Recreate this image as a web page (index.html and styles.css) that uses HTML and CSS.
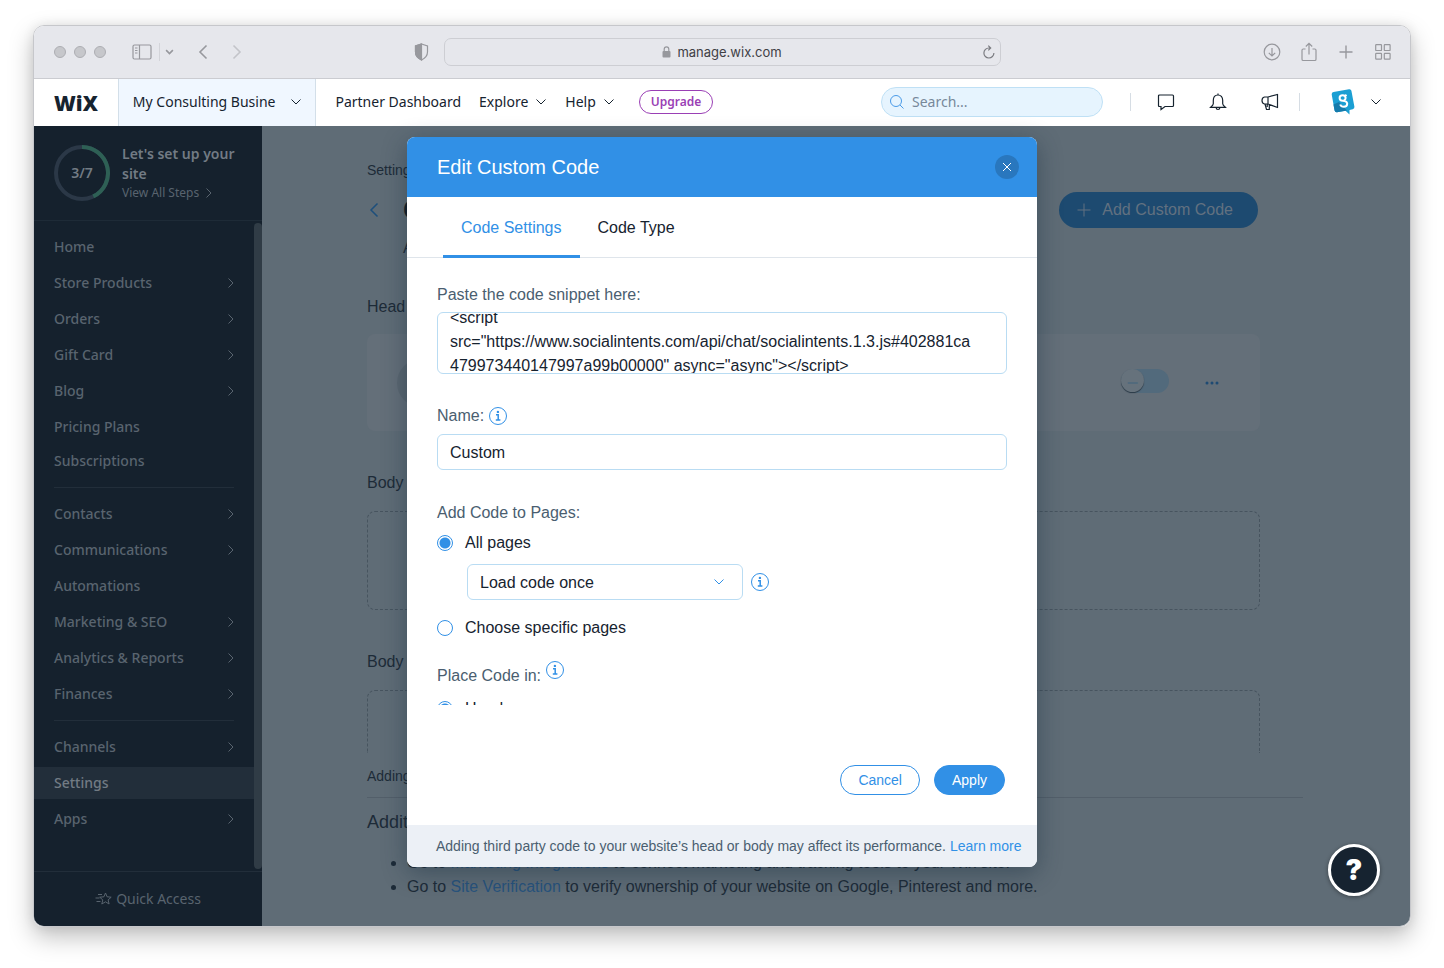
FILE: index.html
```html
<!DOCTYPE html>
<html lang="en">
<head>
<meta charset="utf-8">
<title>Edit Custom Code</title>
<link rel="stylesheet" href="styles.css">
</head>
<body>
<svg class="sprite" aria-hidden="true">
  <symbol id="right" viewBox="0 0 8 12"><path d="M1.5 1.5 6 6l-4.500 4.500"/></symbol>
  <symbol id="left" viewBox="0 0 10 16"><path d="M8.500 1.500 2 8l6.500 6.500"/></symbol>
  <symbol id="down" viewBox="0 0 12 8"><path d="M1.500 1.500 6 6l4.500-4.500"/></symbol>
  <symbol id="info" viewBox="0 0 20 20"><circle cx="10" cy="10" r="8.500"/><path d="M8 8.800h2.200V14M7.800 14h4.600" stroke-width="1.500"/><circle cx="9.900" cy="5.900" r="1.200" fill="currentColor" stroke="none"/></symbol>
</svg>
<div class="window">
  <div class="toolbar">
    <div class="toolbar-left">
      <div class="lights"><span></span><span></span><span></span></div>
      <button class="icon-btn sidebar-btn" aria-label="Show sidebar"><svg width="20" height="16" viewBox="0 0 20 16"><rect x="1" y="1" width="18" height="14" rx="1.500"/><path d="M7.500 1v14M3 4h2.500M3 6.500h2.500M3 9h2.500"/></svg></button>
      <span class="bar-rule"></span>
      <button class="icon-btn tabs-btn" aria-label="Tab groups"><svg width="9" height="6" viewBox="0 0 12 8" stroke-width="2.200"><use href="#down"/></svg></button>
      <button class="icon-btn back-btn" aria-label="Back"><svg width="10" height="16" stroke-width="1.600"><use href="#left"/></svg></button>
      <button class="icon-btn forward-btn" aria-label="Forward"><svg width="10" height="16" viewBox="0 0 10 16" stroke-width="1.600"><path d="M1.500 1.500 8 8l-6.500 6.500"/></svg></button>
      <button class="icon-btn shield-btn" aria-label="Privacy report"><svg width="15" height="18" viewBox="0 0 15 18"><path d="M7.500 1 13.500 3v6c0 4-3 6.500-6 8-3-1.500-6-4-6-8V3z"/><path d="M7.500 1v16c-3-1.500-6-4-6-8V3z" fill="currentColor"/></svg></button>
    </div>
    <div class="address">
      <svg width="9" height="12" viewBox="0 0 9 12"><rect x=".5" y="5" width="8" height="6.500" rx="1" fill="currentColor" stroke="none"/><path d="M2.200 5.500V3.200a2.300 2.300 0 0 1 4.600 0v2.300"/></svg>
      <span>manage.wix.com</span>
      <button class="icon-btn reload-btn" aria-label="Reload"><svg width="12" height="14" viewBox="0 0 12 14"><path d="M10.900 8A5 5 0 1 1 6 3h1.500M5.300.600 7.700 3 5.300 5.400"/></svg></button>
    </div>
    <div class="toolbar-right">
      <button class="icon-btn" aria-label="Downloads"><svg width="18" height="18" viewBox="0 0 18 18"><circle cx="9" cy="9" r="7.800"/><path d="M9 5v8M5.800 9.800 9 13l3.200-3.200"/></svg></button>
      <button class="icon-btn" aria-label="Share"><svg width="18" height="20" viewBox="0 0 18 20"><path d="M5.500 7H3.200Q2 7 2 8.200v9Q2 18.500 3.200 18.500h11.600q1.200 0 1.200-1.300v-9Q16 7 14.800 7h-2.300M9 12.500V1.500M5.800 4.500 9 1.300l3.200 3.200"/></svg></button>
      <button class="icon-btn" aria-label="New tab"><svg width="18" height="18" viewBox="0 0 18 18"><path d="M9 2.500v13M2.500 9h13" stroke-width="1.400"/></svg></button>
      <button class="icon-btn" aria-label="Tab overview"><svg width="18" height="18" viewBox="0 0 18 18"><rect x="1.700" y="1.700" width="5.800" height="5.800" rx=".6"/><rect x="10.300" y="1.700" width="5.800" height="5.800" rx=".6"/><rect x="1.700" y="10.300" width="5.800" height="5.800" rx=".6"/><rect x="10.300" y="10.300" width="5.800" height="5.800" rx=".6"/></svg></button>
    </div>
  </div>

  <header class="header">
    <a class="logo" href="#">WiX</a>
    <button class="site-btn"><span>My Consulting Busine</span><svg width="12" height="8"><use href="#down"/></svg></button>
    <nav class="top-nav">
      <a href="#">Partner Dashboard</a>
      <button>Explore<svg width="12" height="8"><use href="#down"/></svg></button>
      <button>Help<svg width="12" height="8"><use href="#down"/></svg></button>
    </nav>
    <button class="upgrade">Upgrade</button>
    <label class="search"><svg width="16" height="16" viewBox="0 0 16 16"><circle cx="7" cy="7" r="5.500"/><path d="m11 11 3.500 3.500"/></svg><input type="search" placeholder="Search..." aria-label="Search"></label>
    <div class="header-icons">
      <button class="icon-btn" aria-label="Inbox"><svg width="18" height="18" viewBox="0 0 18 18"><path d="M2.500 2h13q1 0 1 1v9.500q0 1-1 1H8l-4 3v-3H2.500q-1 0-1-1V3q0-1 1-1z"/></svg></button>
      <button class="icon-btn" aria-label="Notifications"><svg width="18" height="18" viewBox="0 0 18 18"><path d="M9 .500V2M4.300 7.500C4.300 4 6.300 2 9 2s4.700 2 4.700 5.500v3.200q0 1.300 2.600 3.600H1.700q2.600-2.300 2.600-3.600zM7 14.500q.3 2 2 2t2-2"/></svg></button>
      <button class="icon-btn" aria-label="What's new"><svg width="18" height="18" viewBox="0 0 18 18"><path d="M7 4 16.500 1.500v13L7 11H3.500Q1 10.500 1 7.500T3.500 4zM7 4v7M4 11l1.500 5.500h2.800V11.500M6.200 11v3"/></svg></button>
    </div>
    <button class="account" aria-label="Account"><svg width="26" height="28" viewBox="0 0 26 28"><path d="M3.500 4 19 1.200q2-.3 2.400 1.600l3 16q.3 2-1.700 2.400l-3.200.8v4.500L15.500 22.800 7 24.300q-2 .3-2.400-1.700L1.700 6.500Q1.500 4.400 3.500 4z" fill="#1b9fd3" stroke="none"/><path d="M3.500 16.500 9 14l8 8.500L7 24.300q-2 .3-2.400-1.700z" fill="#157bab" stroke="none"/><path d="M16.500 6.800 15 8.200M15.600 10a3 2.700 0 1 0-3 2.700q4.300 0 4.600 3 0 3-3.400 3-2.800 0-3.600-2.200M15.600 10q0 2-1.800 2.700" stroke="#fff" stroke-width="2"/></svg><svg width="12" height="8"><use href="#down"/></svg></button>
  </header>

  <div class="app">
    <aside class="sidebar">
      <div class="setup">
        <div class="ring"><svg width="56" height="56" viewBox="0 0 56 56"><circle cx="28" cy="28" r="26" stroke="#2b3847"/><path d="M28 2a26 26 0 0 1 11.280 49.420" stroke="#2e6055"/></svg><span>3/7</span></div>
        <div class="setup-text"><strong>Let's set up your site</strong><a href="#">View All Steps<svg width="8" height="12"><use href="#right"/></svg></a></div>
      </div>
      <div class="menu-scroll">
        <nav class="menu">
          <a href="#">Home</a>
          <a href="#">Store Products<svg><use href="#right"/></svg></a>
          <a href="#">Orders<svg><use href="#right"/></svg></a>
          <a href="#">Gift Card<svg><use href="#right"/></svg></a>
          <a href="#">Blog<svg><use href="#right"/></svg></a>
          <div class="submenu"><a href="#">Pricing Plans</a><a href="#">Subscriptions</a></div>
          <hr>
          <a href="#">Contacts<svg><use href="#right"/></svg></a>
          <a href="#">Communications<svg><use href="#right"/></svg></a>
          <a href="#">Automations</a>
          <a href="#">Marketing &amp; SEO<svg><use href="#right"/></svg></a>
          <a href="#">Analytics &amp; Reports<svg><use href="#right"/></svg></a>
          <a href="#">Finances<svg><use href="#right"/></svg></a>
          <hr>
          <a href="#">Channels<svg><use href="#right"/></svg></a>
          <a href="#" class="active">Settings</a>
          <a href="#">Apps<svg><use href="#right"/></svg></a>
        </nav>
        <span class="scrollbar"></span>
      </div>
      <button class="quick"><svg width="17" height="14" viewBox="0 0 17 14"><path d="m10.500 1 1.600 3.800 4.100.4-3.100 2.700 1 4.100-3.600-2.200L6.800 12l1-4.100L4.700 5.200l4.200-.4zM3 2.500h4M.500 6h4M1.500 9.500h4"/></svg>Quick Access</button>
    </aside>

    <main class="main">
      <section class="page">
        <div class="crumb">Settings</div>
        <div class="title-row">
          <a class="back" href="#" aria-label="Back to settings"><svg width="10" height="16" stroke-width="1.500"><use href="#left"/></svg></a>
          <h1>Custom Code</h1>
          <button class="add-btn"><svg width="14" height="14" viewBox="0 0 14 14"><path d="M7 .500v13M.500 7h13"/></svg>Add Custom Code</button>
        </div>
        <p class="intro">Add custom code to your site.</p>
        <h2>Head</h2>
        <div class="code-card">
          <span class="badge"></span>
          <input class="toggle" type="checkbox" aria-label="Enable code">
          <button class="icon-btn more" aria-label="More actions"><svg width="14" height="4" viewBox="0 0 14 4"><circle cx="2" cy="2" r="1.500"/><circle cx="7" cy="2" r="1.500"/><circle cx="12" cy="2" r="1.500"/></svg></button>
        </div>
        <h2>Body - start</h2>
        <div class="drop"></div>
        <h2>Body - end</h2>
        <div class="drop cut"></div>
      </section>
      <section class="notes">
        <p class="warning">Adding code may affect your site.</p>
        <h3>Additional Tools</h3>
        <ul>
          <li>Go to <a href="#">Marketing Integrations</a> to connect marketing and tracking tools to your Wix site.</li>
          <li>Go to <a href="#">Site Verification</a> to verify ownership of your website on Google, Pinterest and more.</li>
        </ul>
      </section>
    </main>

    <div class="overlay">
      <div class="modal" role="dialog" aria-labelledby="modal-title">
        <div class="modal-head">
          <h2 id="modal-title">Edit Custom Code</h2>
          <button class="close" aria-label="Close"><svg width="10" height="10" viewBox="0 0 10 10"><path d="m1 1 8 8M9 1 1 9"/></svg></button>
        </div>
        <div class="tabs" role="tablist">
          <button role="tab" aria-selected="true" class="selected">Code Settings</button>
          <button role="tab" aria-selected="false">Code Type</button>
        </div>
        <form class="form" id="code-form">
          <div class="field">
            <label for="snippet">Paste the code snippet here:</label>
            <textarea id="snippet" wrap="off">&lt;script
src="https://www.socialintents.com/api/chat/socialintents.1.3.js#402881ca
479973440147997a99b00000" async="async"&gt;&lt;/script&gt;</textarea>
          </div>
          <div class="field">
            <div class="label-row"><label for="name">Name:</label><svg class="info"><use href="#info"/></svg></div>
            <input id="name" type="text" value="Custom">
          </div>
          <fieldset>
            <legend>Add Code to Pages:</legend>
            <label class="radio"><input type="radio" name="pages" checked>All pages</label>
            <div class="select-row">
              <div class="select"><select aria-label="Load frequency"><option>Load code once</option></select><svg width="12" height="8"><use href="#down"/></svg></div>
              <svg class="info"><use href="#info"/></svg>
            </div>
            <label class="radio"><input type="radio" name="pages">Choose specific pages</label>
          </fieldset>
          <fieldset class="place">
            <legend class="label-row">Place Code in:<svg class="info"><use href="#info"/></svg></legend>
            <label class="radio"><input type="radio" name="place" checked>Head</label>
          </fieldset>
        </form>
        <div class="actions"><button class="cancel">Cancel</button><button class="apply" form="code-form">Apply</button></div>
        <div class="modal-foot">Adding third party code to your website’s head or body may affect its performance. <a href="#">Learn more</a></div>
      </div>
    </div>
    <button class="help" aria-label="Help">?</button>
  </div>
</div>
<script src="main.js"></script>
</body>
</html>
```
FILE: styles.css
```css
* { box-sizing: border-box; }

:root {
  --blue: #3190e6;
  --ink: #16232f;
  --rail: #15212d;
  --rail-text: #59646f;
  --veil: #5f6c76;
}

body {
  margin: 0;
  padding: 25px 33px 42px;
  background: #fff;
  color: var(--ink);
  font: 16px/24px "Liberation Sans", Arial, sans-serif;
}

a { color: inherit; text-decoration: none; }
h1, h2, h3, p, ul { margin: 0; font-weight: 400; }
svg { flex: none; fill: none; stroke: currentColor; }
.sprite { position: absolute; width: 0; height: 0; }

button {
  display: flex;
  align-items: center;
  padding: 0;
  border: 0;
  background: none;
  color: inherit;
  font: inherit;
}

.window {
  overflow: hidden;
  border: 1px solid #c6c7cb;
  border-radius: 11px;
  box-shadow: 0 10px 24px rgba(0, 0, 0, .25), 0 0 12px rgba(0, 0, 0, .08);
}

/* Browser toolbar */
.toolbar {
  display: grid;
  grid-template-columns: 1fr minmax(0, 557px) 1fr;
  align-items: center;
  height: 53px;
  border-bottom: 1px solid #cbccd1;
  background: #e6e7ec;
  color: #97989d;
  stroke-width: 1.2;
}
.toolbar-left { display: flex; align-items: center; padding-left: 20px; }
.lights { display: flex; gap: 8px; }
.lights span { width: 12px; height: 12px; border: 1px solid #adaeb3; border-radius: 50%; background: #c6c7cb; }
.sidebar-btn { margin-left: 26px; }
.bar-rule { width: 1px; height: 18px; margin: 0 5px 0 7px; background: #d3d4d9; }
.back-btn { margin-left: 24px; }
.forward-btn { margin-left: 24px; color: #c3c4c9; }
.shield-btn { margin: 0 15px 0 auto; }
.address {
  display: flex;
  align-items: center;
  justify-content: center;
  gap: 6px;
  position: relative;
  height: 28px;
  border: 1px solid #cdced3;
  border-radius: 7px;
  font: 13px/16px Inter, sans-serif;
}
.address span { color: #3f4045; }
.reload-btn { position: absolute; right: 5px; color: #7c7d82; }
.toolbar-right { display: flex; justify-content: flex-end; gap: 19px; padding-right: 18px; }

/* Site header */
.header {
  display: flex;
  align-items: center;
  height: 47px;
  background: #fff;
  font: 14px/20px "Noto Sans", sans-serif;
}
.logo { padding: 0 20px; font: 800 21px/24px "Open Sans", sans-serif; }
.site-btn {
  gap: 15px;
  align-self: stretch;
  padding: 0 13px 2px 14px;
  border: 1px solid #d3dfe9;
  border-width: 0 1px;
  background: #f0f7ff;
}
.top-nav { display: flex; gap: 18px; padding: 0 0 2px 19px; }
.top-nav button { gap: 7px; }
.upgrade {
  height: 24px;
  margin: 0 0 2px 24px;
  padding: 0 11px;
  border: 1px solid #9a3fb5;
  border-radius: 12px;
  color: #9a3fb5;
  font-size: 12px;
  font-weight: 600;
}
.search {
  display: flex;
  align-items: center;
  gap: 7px;
  width: 222px;
  height: 30px;
  margin: 0 0 2px auto;
  padding: 0 8px 0 7px;
  border: 1px solid #bfe0f5;
  border-radius: 15px;
  background: #e6f4fe;
  color: #4a9be8;
}
.search input { min-width: 0; flex: 1; padding: 0; border: 0; background: none; font: inherit; }
.search input::placeholder { color: #77889a; opacity: 1; }
.header-icons {
  display: flex;
  gap: 34px;
  margin: 0 30px 2px 27px;
  padding: 0 20px 0 26px;
  border: 1px solid #d6dde4;
  border-width: 0 1px;
  stroke-width: 1.2;
}
.account { gap: 14px; margin: 0 28px 2px 0; }

/* Application */
.app { position: relative; display: flex; background: var(--veil); }

.sidebar {
  display: flex;
  flex: none;
  flex-direction: column;
  width: 228px;
  background: var(--rail);
  color: var(--rail-text);
  font: 500 14px/20px "Noto Sans", sans-serif;
}
.setup { display: flex; gap: 12px; height: 95px; padding: 18px 20px; border-bottom: 1px solid #1e2b37; }
.ring { display: grid; place-items: center; flex: none; height: 56px; margin-top: 1px; color: #727b84; font-weight: 600; }
.ring svg, .ring span { grid-area: 1 / 1; }
.ring svg { stroke-width: 4; }
.setup-text strong { display: block; color: #727b84; font-weight: 600; }
.setup-text a { display: flex; align-items: center; gap: 6px; font-size: 12px; font-weight: 400; line-height: 18px; }
.menu-scroll { display: flex; flex: 1; }
.menu { display: flex; flex: 1; flex-direction: column; gap: 4px; padding-top: 10px; }
.menu a { display: flex; align-items: center; justify-content: space-between; height: 32px; padding: 0 19px 0 20px; }
.menu svg { width: 8px; height: 12px; }
.menu .active { background: #222e3a; color: #727b84; }
.submenu { display: grid; gap: 2px; }
.menu hr { height: 1px; margin: 6px 20px; border: 0; background: #222e3a; }
.scrollbar { width: 8px; margin: 2px 0; border-radius: 4px; background: #303c46; }
.quick { justify-content: center; gap: 4px; height: 55px; border-top: 1px solid #222e3a; font-weight: 400; }

.main { flex: 1; min-width: 0; overflow: hidden; padding: 32px 107px 27px 105px; color: #1d2b38; }
.page { margin-right: 43px; }
.crumb { font-size: 14px; }
.title-row { display: flex; align-items: center; height: 36px; margin-top: 10px; padding: 0 2px; color: #1d4f7c; }
.back { display: flex; }
.title-row h1 { margin-left: 24px; color: #101c27; font-size: 28px; font-weight: 700; }
.add-btn { gap: 11px; height: 36px; margin-left: auto; padding: 0 25px 0 18px; border-radius: 18px; background: #1d4a70; color: #627180; }
.intro { margin: 8px 0 0 36px; }
.page h2 { margin-top: 40px; font-size: 16px; line-height: 24px; }
.page .intro + h2 { margin-top: 35px; }
.code-card { display: flex; align-items: center; gap: 36px; height: 97px; margin-top: 15px; padding: 0 41px 0 30px; border-radius: 8px; background: #646f79; }
.badge { width: 48px; height: 48px; border-radius: 50%; background: #5b6771; }
.toggle { display: flex; align-items: center; appearance: none; width: 48px; height: 24px; margin: 0 0 4px auto; border-radius: 12px; background: #526a7c; }
.toggle::before { content: "–"; display: grid; place-items: center; width: 23px; height: 23px; border-radius: 50%; background: #66727c; box-shadow: 0 1px 1px #2b3945; color: #526a7c; font: 700 20px/20px "Liberation Sans", sans-serif; }
.more { color: #1e4a73; }
.more svg { fill: currentColor; stroke: none; }
.drop { height: 99px; margin-top: 16px; border: 1px dashed #47545f; border-radius: 8px; }
.drop.cut { height: 63px; border-bottom: 0; border-radius: 8px 8px 0 0; }
.warning { margin-top: 11px; padding-bottom: 9px; border-bottom: 1px solid #535f6a; font-size: 14px; }
.notes h3 { margin-top: 12px; font-size: 18px; }
.notes ul { margin-top: 17px; padding-left: 40px; }
.notes a { color: #28537d; }

/* Dialog */
.overlay { position: absolute; inset: 0; display: flex; align-items: flex-start; justify-content: center; padding: 11px 20px; }
.modal { width: 630px; overflow: hidden; border-radius: 8px; background: #fff; box-shadow: 0 6px 24px rgba(22, 45, 61, .45); }
.modal-head { display: flex; align-items: center; justify-content: space-between; height: 60px; padding: 0 18px 0 30px; background: var(--blue); color: #fff; }
.modal-head h2 { font-size: 20px; }
.close { justify-content: center; width: 24px; height: 24px; border-radius: 50%; background: #2977be; }
.tabs { display: flex; height: 61px; padding: 0 36px; border-bottom: 1px solid #dfe5eb; }
.tabs button { height: 61px; padding: 3px 18px 0; border-bottom: 3px solid transparent; }
.tabs .selected { border-color: var(--blue); color: var(--blue); }
.form { height: 447px; padding: 25px 30px 0; overflow: hidden; }
.field { display: grid; margin-bottom: 30px; }
.field label, legend { color: #4a5e70; }
.label-row { display: flex; align-items: center; gap: 4px; }
.info { width: 20px; height: 20px; color: var(--blue); }
textarea, input[type="text"], select {
  width: 100%;
  height: 36px;
  padding: 1px 12px 0;
  border: 1px solid #b9dcf3;
  border-radius: 6px;
  background: #fff;
  color: var(--ink);
  font: inherit;
}
textarea { height: 62px; margin-top: 5px; padding: 6px 12px; overflow: hidden; resize: none; }
.field input { margin-top: 6px; }
fieldset { margin: 0; padding: 0; border: 0; }
legend { padding: 1px 0 0; }
.radio { display: flex; align-items: center; gap: 12px; margin-top: 6px; }
.radio input { appearance: none; width: 16px; height: 16px; margin: 0; border: 1px solid var(--blue); border-radius: 50%; }
.radio input:checked { background: radial-gradient(circle, var(--blue) 5px, #fff 6px); }
.select-row { display: flex; align-items: center; gap: 7px; margin: 9px 0 16px 30px; }
.select { display: grid; align-items: center; width: 276px; }
.select select, .select svg { grid-area: 1 / 1; }
.select select { appearance: none; }
.select svg { justify-self: end; margin-right: 18px; color: var(--blue); }
.place { margin-top: 23px; }
.place .label-row { align-items: flex-start; }
.place .info { margin-top: -4px; }
.place .radio { margin-top: 9px; }
.actions { display: flex; justify-content: flex-end; gap: 14px; padding: 60px 32px 30px; font-size: 14px; }
.actions button { height: 30px; padding: 0 17px; border: 1px solid var(--blue); border-radius: 15px; color: var(--blue); }
.actions .apply { background: var(--blue); color: #fff; }
.modal-foot { min-height: 42px; padding: 9px 0 9px 29px; background: #ecf0f6; color: #4a5e70; font-size: 14px; }
.modal-foot a { color: var(--blue); }

.help {
  position: absolute;
  right: 30px;
  bottom: 30px;
  justify-content: center;
  width: 52px;
  height: 52px;
  border: 3px solid #fff;
  border-radius: 50%;
  background: #162330;
  box-shadow: 0 1px 4px rgba(0, 0, 0, .4);
  color: #fff;
  font: 900 28px/28px Inter, sans-serif;
}
```
FILE: main.js
```js
// Open the snippet box with its first line partly scrolled out of view.
document.getElementById('snippet').scrollTop = 13;
```
